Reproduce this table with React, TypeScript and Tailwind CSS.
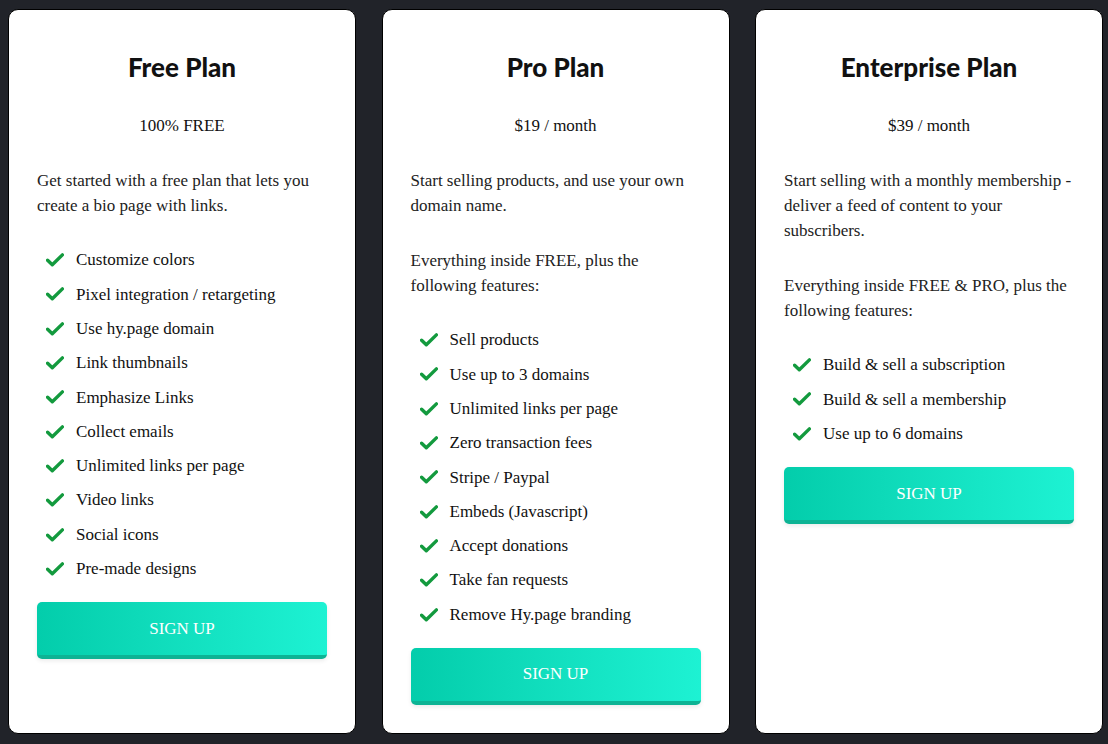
import React from "react";

type Plan = {
  title: string;
  price: string;
  desc: string;
  extra?: string;
  features: string[];
};

const plans: Plan[] = [
  {
    title: "Free Plan",
    price: "100% FREE",
    desc: "Get started with a free plan that lets you create a bio page with links.",
    features: [
      "Customize colors",
      "Pixel integration / retargeting",
      "Use hy.page domain",
      "Link thumbnails",
      "Emphasize Links",
      "Collect emails",
      "Unlimited links per page",
      "Video links",
      "Social icons",
      "Pre-made designs",
    ],
  },
  {
    title: "Pro Plan",
    price: "$19 / month",
    desc: "Start selling products, and use your own domain name.",
    extra: "Everything inside FREE, plus the following features:",
    features: [
      "Sell products",
      "Use up to 3 domains",
      "Unlimited links per page",
      "Zero transaction fees",
      "Stripe / Paypal",
      "Embeds (Javascript)",
      "Accept donations",
      "Take fan requests",
      "Remove Hy.page branding",
    ],
  },
  {
    title: "Enterprise Plan",
    price: "$39 / month",
    desc: "Start selling with a monthly membership - deliver a feed of content to your subscribers.",
    extra: "Everything inside FREE & PRO, plus the following features:",
    features: [
      "Build & sell a subscription",
      "Build & sell a membership",
      "Use up to 6 domains",
    ],
  },
];

function Check() {
  return (
    <svg width="18" height="14" viewBox="0 0 18 14" className="shrink-0">
      <path
        d="M1.6 7.2 L6.3 11.8 L16.4 1.9"
        fill="none"
        stroke="#139a3e"
        strokeWidth="3.4"
        strokeLinecap="round"
        strokeLinejoin="round"
      />
    </svg>
  );
}

function Card({ plan }: { plan: Plan }) {
  return (
    <div className="bg-white border border-black rounded-[10px] pt-[41px] px-[28px] h-[725px]">
      <h2 className="text-center text-[26px] leading-[32px] font-black text-[#111] font-['Lato',sans-serif]">
        {plan.title}
      </h2>
      <p className="mt-[30px] text-center text-[17px] leading-[25px] text-[#111]">{plan.price}</p>
      <p className="mt-[30px] text-[17px] leading-[25px] text-[#222]">{plan.desc}</p>
      {plan.extra && (
        <p className="mt-[30px] text-[17px] leading-[25px] text-[#222]">{plan.extra}</p>
      )}
      <ul className="mt-[25px] pl-[9px]">
        {plan.features.map((f) => (
          <li key={f} className="flex items-center gap-[12px] h-[34.3px] text-[17px] text-[#111]">
            <Check />
            <span>{f}</span>
          </li>
        ))}
      </ul>
      <button className="mt-[16px] w-full h-[57px] rounded-[5px] border-b-[4px] border-[#0db394] bg-gradient-to-r from-[#03cdab] to-[#1df2d3] text-white text-[17px] shadow-[0_2px_4px_rgba(0,0,0,0.08)]">
        SIGN UP
      </button>
    </div>
  );
}

export default function App() {
  return (
    <div className="w-[1108px] h-[744px] bg-[#212329] pt-[9px] pl-[8px] font-['Liberation_Serif',serif] overflow-hidden">
      <div className="grid grid-cols-[348px_348px_348px] gap-x-[25.5px]">
        {plans.map((p) => (
          <Card key={p.title} plan={p} />
        ))}
      </div>
    </div>
  );
}
